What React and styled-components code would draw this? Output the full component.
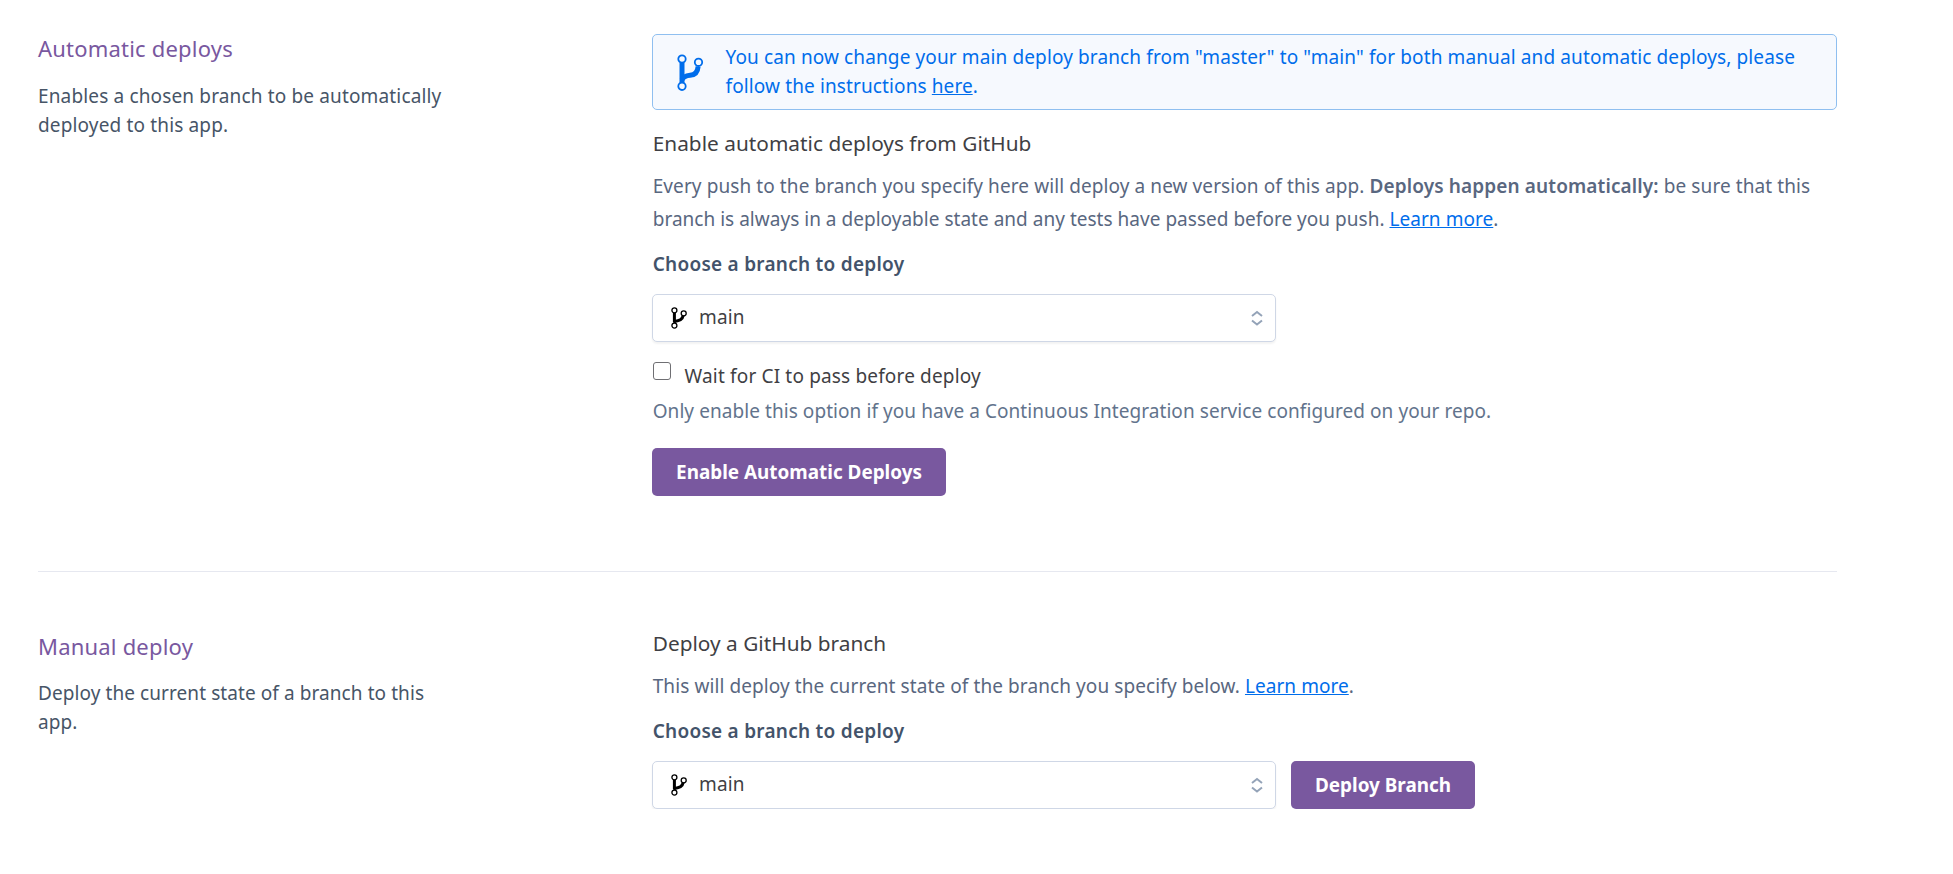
import React from "react";
import styled, { createGlobalStyle } from "styled-components";

const GlobalStyle = createGlobalStyle`
  * { box-sizing: border-box; }
  body {
    margin: 0;
    background: #fff;
    font-family: "Noto Sans", "Open Sans", sans-serif;
    font-size: 19px;
    line-height: 30px;
    letter-spacing: 0.12px;
    color: #3f3f44;
  }
  h2, h3, p { margin: 0; font-weight: 400; }
`;

const Page = styled.main`
  width: 1837px;
  padding: 33px 0 0 38px;
`;

const Section = styled.section`
  display: grid;
  grid-template-columns: 614px 1185px;
  padding: ${(p) => p.$pad};
  border-bottom: ${(p) => (p.$divided ? "1px solid #e6e8f0" : "none")};
`;

const Aside = styled.div`
  width: 430px;
  padding-top: ${(p) => p.$offset || 0}px;
`;

const Content = styled.div`
  padding-top: ${(p) => p.$offset || 0}px;
`;

const Title = styled.h2`
  font-size: 22px;
  line-height: 30px;
  letter-spacing: 0.2px;
  color: #79589f;
`;

const Description = styled.p`
  margin-top: ${(p) => p.$gap}px;
  line-height: 29px;
  letter-spacing: ${(p) => p.$spacing}px;
  color: #475567;
`;

const Alert = styled.div`
  display: flex;
  align-items: flex-start;
  height: 76px;
  padding: 8px 24px 0 24px;
  margin-bottom: 18px;
  border: 1px solid #8fbff0;
  border-radius: 5px;
  background: #f6f9fe;
  color: #006deb;
`;

const AlertIcon = styled.svg`
  flex: none;
  width: 28px;
  height: 38px;
  margin: 11px 20.5px 0 0;
`;

const AlertText = styled.p`
  line-height: 29px;
`;

const Link = styled.a`
  color: ${(p) => (p.$inherit ? "inherit" : "#006deb")};
  letter-spacing: 0.05px;
  text-decoration: underline;
  text-decoration-thickness: 1px;
  text-underline-offset: 1px;
`;

const Heading = styled.h3`
  padding-left: 0.7px;
  font-size: 20.8px;
  line-height: 30px;
  letter-spacing: 0.02px;
`;

const Paragraph = styled.p`
  margin-top: 12px;
  padding-left: 0.7px;
  line-height: 33px;
  letter-spacing: 0.09px;
  color: #596780;
`;

const Tight = styled.span`
  letter-spacing: 0.02px;
`;

const Strong = styled.strong`
  font-weight: 600;
  letter-spacing: 0.12px;
`;

const Label = styled.div`
  margin: 13px 0 15px;
  padding-left: 0.7px;
  font-weight: 600;
  letter-spacing: 0.26px;
  color: #43536a;
`;

const Row = styled.div`
  display: flex;
  gap: 15px;
`;

const Select = styled.button`
  display: flex;
  align-items: center;
  width: 624px;
  height: 48px;
  padding: 0 12px 0 17px;
  border: 1px solid #cfd7e6;
  border-radius: 5px;
  background: #fff;
  box-shadow: 0 2px 2px rgba(0, 0, 0, 0.05);
  color: inherit;
  font: inherit;
  letter-spacing: 0.15px;
`;

const SelectIcon = styled.svg`
  width: 18px;
  height: 24px;
  margin-right: 11px;
`;

const SelectValue = styled.span`
  flex: 1;
  padding-bottom: 2px;
  text-align: left;
`;

const Chevrons = styled.svg`
  width: 12px;
  height: 16px;
`;

const CheckRow = styled.label`
  display: flex;
  align-items: flex-start;
  gap: 13.6px;
  margin-top: 19px;
  padding-left: 1px;
  letter-spacing: 0.16px;
`;

const Checkbox = styled.input`
  appearance: none;
  width: 18px;
  height: 18px;
  margin: 1px 0 0;
  border: 1px solid #6f6f73;
  border-radius: 3px;
  background: #fff;
`;

const Hint = styled.p`
  margin: 5px 0 22px;
  padding-left: 0.7px;
  letter-spacing: 0.067px;
  color: #62738c;
`;

const Button = styled.button`
  width: ${(p) => p.$width}px;
  height: 48px;
  padding: 0 0 1px;
  border: 0;
  border-radius: 5px;
  background: #79589f;
  color: #fff;
  font: inherit;
  font-size: 18.9px;
  font-weight: 700;
  letter-spacing: 0;
`;

function BranchSelect() {
  return (
    <Select type="button">
      <SelectIcon viewBox="0 0 18 24" fill="none" stroke="#000">
        <path d="M4.4 6.7v9.6" strokeWidth="3" />
        <path d="M13.2 9.6c-.7 4-3.5 5.4-8.5 5.8" strokeWidth="3" />
        <circle cx="4.4" cy="4.3" r="2.5" strokeWidth="1.3" />
        <circle cx="13.7" cy="7.3" r="2.5" strokeWidth="1.3" />
        <circle cx="4.4" cy="19.6" r="2.5" strokeWidth="1.3" />
        <path d="M4.4 15v2" strokeWidth="2" />
      </SelectIcon>
      <SelectValue>main</SelectValue>
      <Chevrons viewBox="0 0 12 16" fill="none" stroke="#94a3b8" strokeWidth="2">
        <path d="M1 6l5-4 5 4M1 10.5l5 4 5-4" />
      </Chevrons>
    </Select>
  );
}

export default function App() {
  return (
    <>
      <GlobalStyle />
      <Page>
        <Section $pad="0 0 75px" $divided>
          <Aside>
            <Title>Automatic deploys</Title>
            <Description $gap={19} $spacing={0.15}>
              Enables a chosen branch to be automatically
              <br />
              deployed to this app.
            </Description>
          </Aside>
          <Content $offset={1}>
            <Alert>
              <AlertIcon viewBox="0 0 28 38" fill="none" stroke="#006deb">
                <path d="M5 8.5v21" strokeWidth="5" />
                <path d="M21.1 12.5c-.4 6-3.2 8.4-8 8.8-4.5.4-7 1.6-8 4.6" strokeWidth="5" />
                <circle cx="5" cy="5" r="3.7" strokeWidth="1.8" fill="#f6f9fe" />
                <circle cx="21.5" cy="8.3" r="3.7" strokeWidth="1.8" fill="#f6f9fe" />
                <circle cx="5" cy="32.3" r="3.7" strokeWidth="1.8" fill="#f6f9fe" />
              </AlertIcon>
              <AlertText>
                You can now change your main deploy branch from "master" to "main" for both manual and automatic deploys, please
                <br />
                follow the instructions <Link $inherit>here</Link>.
              </AlertText>
            </Alert>
            <Heading>Enable automatic deploys from GitHub</Heading>
            <Paragraph>
              Every push to the branch you specify here will deploy a new version of this app.{" "}
              <Strong>Deploys happen automatically:</Strong> be sure that this
              <br />
              <Tight>branch is always in a deployable state and any tests have passed before you push. </Tight>
              <Link>Learn more</Link>.
            </Paragraph>
            <Label>Choose a branch to deploy</Label>
            <BranchSelect />
            <CheckRow>
              <Checkbox type="checkbox" />
              Wait for CI to pass before deploy
            </CheckRow>
            <Hint>
              Only enable this option if you have a Continuous Integration service configured on your repo.
            </Hint>
            <Button $width={294}>Enable Automatic Deploys</Button>
          </Content>
        </Section>
        <Section $pad="56px 0 0">
          <Aside $offset={3}>
            <Title>Manual deploy</Title>
            <Description $gap={18} $spacing={0.08}>
              Deploy the current state of a branch to this
              <br />
              app.
            </Description>
          </Aside>
          <Content>
            <Heading>Deploy a GitHub branch</Heading>
            <Paragraph>
              This will deploy the current state of the branch you specify below. <Link>Learn more</Link>.
            </Paragraph>
            <Label>Choose a branch to deploy</Label>
            <Row>
              <BranchSelect />
              <Button $width={184}>Deploy Branch</Button>
            </Row>
          </Content>
        </Section>
      </Page>
    </>
  );
}
